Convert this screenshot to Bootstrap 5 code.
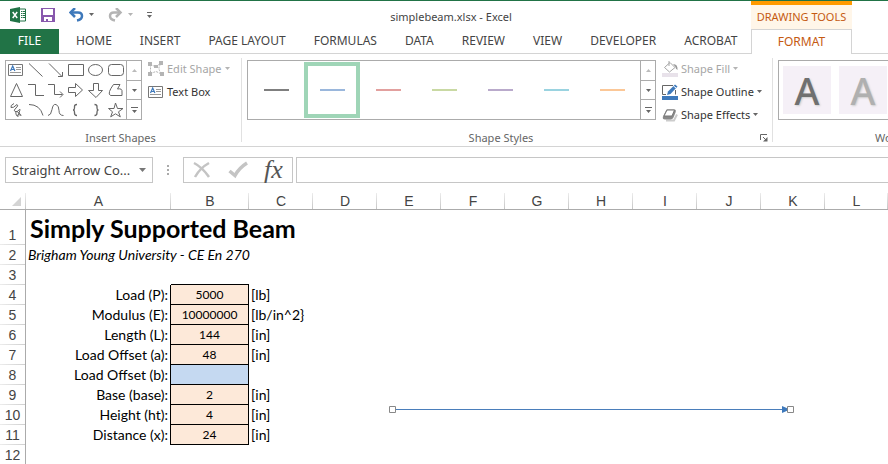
<!DOCTYPE html>
<html lang="en">
<head>
<meta charset="utf-8">
<meta name="viewport" content="width=device-width, initial-scale=1">
<title>simplebeam.xlsx - Excel</title>
<link href="https://cdn.jsdelivr.net/npm/bootstrap@5.3.0/dist/css/bootstrap.min.css" rel="stylesheet">
<style>
body{font:11px/16px "Noto Sans","Open Sans",sans-serif;color:#444;background:#fff;overflow:hidden}
button,a,select,input{font:inherit;color:inherit}
button{background:none;border:0;padding:0}
svg{display:block;flex:none}
.titlebar{height:29px;border-top:1px solid #217346}
.qat{width:151px;padding-left:10px;gap:14px}
.context-head{width:101px;margin-right:36px;border-top:4px solid #ff9a00;background:#fff6e9;color:#c55a11}
.tabs{height:25px;font-size:12px}
.tabs a{padding:0 14px;border-bottom:1px solid #d4d4d4;text-decoration:none;white-space:nowrap;line-height:24px}
.tabs .file-tab{width:59px;flex:none;padding:0;background:#217346;border-color:#217346;color:#fff;text-align:center}
.tabs .context-tab{width:101px;flex:none;padding:0;text-align:center;border:1px solid #d4d4d4;border-bottom:0;color:#c55a11;line-height:23px}
.tabs .fill{border-bottom:1px solid #d4d4d4}
.tabs .tab-start{width:3px;flex:none}
.tabs .tab-end{width:36px;flex:none}
.ribbon{height:93px;border-bottom:1px solid #d4d4d4;padding:4px 0}
.group{border-right:1px solid #e1e1e1;padding-top:2px;flex:none}
.group-insert{width:242px}
.group-styles{width:531px}
.group-wordart{padding:2px 0 0 5px;min-width:0}
.group-label{color:#666;height:8px;line-height:8px;margin-top:auto;white-space:nowrap}
.group-wordart .group-label{padding-left:97px}
.tools{padding-left:5px}
.gallery{height:60px;border:1px solid #ababab}
.shapes{display:grid;grid-template-columns:repeat(6,20px);grid-auto-rows:20px;align-content:center}
.scroller{width:15px;border-left:1px solid #ababab}
.scroller button{flex:1;display:flex;align-items:center;justify-content:center;border-top:1px solid #ababab}
.scroller button:first-child{border-top:0}
.style-item{width:56px;height:56px;display:flex;align-items:center;justify-content:center}
.style-item.chosen{border:4px solid #9fd5b7}
.style-item i{width:25px;height:2px;background:currentColor}
.cmds{margin:-3px 0 -6px 6px}
.cmd{height:23px;display:flex;align-items:center;gap:3px;white-space:nowrap;color:#333}
.cmd.off{color:#a6a6a6}
.wordart{width:48px;height:48px;background:#f5f0f7;flex:none;font-size:38px;line-height:48px;font-weight:500;color:#707070;text-shadow:1px 1px 2px #ccc}
.wordart.pale{color:#b0b0b0}
.formula{padding:10px 0 10px 5px;height:46px}
.boxed{border:1px solid #c6c6c6;height:26px}
.namebox{width:148px}
.namebox select{appearance:none;border:0;background:none;width:100%;padding:0 18px 0 6px;font-size:13px}
.namebox svg{margin-left:-13px;pointer-events:none}
.grip{margin:0 14px}
.fxbox{width:110px}
.fx{font:italic 26px/22px "Liberation Serif",serif;color:#555}
.fxbar{border-right:0;border-radius:0;padding:0 6px;min-width:0;margin-left:3px}
.sheet{color:#000;font:14px/18px Lato,sans-serif}
.grid{table-layout:fixed;width:100%;border-collapse:separate;border-spacing:0}
.grid th,.grid td{padding:0 1px;height:20px;white-space:nowrap;overflow:visible}
.grid th{font:14px/16px "Liberation Sans",sans-serif;color:#444;text-align:center}
.grid thead th{height:17px;border-bottom:1px solid #ababab;background:linear-gradient(#ececec,#c6c6c6) right/1px 100% no-repeat}
.grid tbody th{border-right:1px solid #ababab;background:linear-gradient(90deg,#ececec,#d0d0d0) bottom/100% 1px no-repeat;vertical-align:bottom;padding-bottom:2px}
.grid .r-head{width:26px}.grid .c-a{width:145px}.grid .c-b{width:78px}.grid .c-n{width:64px}
.grid .tall td,.grid .tall th{height:35px}
.grid td.heading{font-size:25px;font-weight:700;line-height:34px;padding-left:4px}
.grid td.sub{font-style:italic;padding-left:2px}
.grid .lbl{text-align:right;border-right:1px solid #000;padding-right:2px}
.grid .val{font-size:12px;text-align:center;background:#fde9d9;border-right:1px solid #000;border-bottom:1px solid #000}
.grid .blue{background:#c5d9f1}
.grid .edge{border-bottom:1px solid #000}
.grid .unit{padding-left:2px}
.connector{position:absolute;left:389px;top:213px}
</style>
<script src="https://cdn.jsdelivr.net/npm/bootstrap@5.3.0/dist/js/bootstrap.bundle.min.js"></script>
</head>
<body>
<header>
<div class="titlebar d-flex">
  <div class="qat d-flex align-items-center flex-shrink-0">
    <svg width="17" height="16" viewBox="0 0 17 16" aria-hidden="true"><path d="M9 2h6.500v12H9z" fill="#fff" stroke="#217346"/><path d="M11 4.500h1.500M13 4.500h2M11 6.500h1.500M13 6.500h2M11 8.500h1.500M13 8.500h2M11 10.500h1.500M13 10.500h2" stroke="#217346"/><path d="M0 2 10 0v16L0 14z" fill="#217346"/><path d="M2.700 5l4.500 6M7.200 5l-4.500 6" stroke="#fff" stroke-width="1.500"/></svg>
    <button aria-label="Save"><svg width="14" height="14" viewBox="0 0 14 14"><path d="M0 0h14v14H0z" fill="#8858ad"/><path d="M2 1h10v6H2zM3 9h8v4H3z" fill="#fff"/><path d="M5 11h2v2H5z" fill="#8858ad"/></svg></button>
    <button aria-label="Undo"><svg width="25" height="14" viewBox="0 0 25 14"><path d="M1.500 4.500H9q4 0 4 3.500t-5 4.500" fill="none" stroke="#3e79bb" stroke-width="2.500"/><path d="M6 0 1.500 4.500 6 9" fill="none" stroke="#3e79bb" stroke-width="2.500"/><path d="M20 5h5l-2.500 3z" fill="#666"/></svg></button>
    <button aria-label="Redo"><svg width="25" height="14" viewBox="0 0 25 14"><path d="M12.500 4.500H6q-4 0-4 3.500t5 4.500" fill="none" stroke="#b4b4b4" stroke-width="2.500"/><path d="M8 0l4.500 4.500L8 9" fill="none" stroke="#b4b4b4" stroke-width="2.500"/><path d="M20 5h5l-2.500 3z" fill="#b4b4b4"/></svg></button>
    <button aria-label="Customize toolbar"><svg width="5" height="6" viewBox="0 0 5 6"><path d="M0 0h5v1H0zM0 3h5L2.500 6z" fill="#666"/></svg></button>
  </div>
  <div class="flex-grow-1 d-flex align-items-center justify-content-center pt-1">simplebeam.xlsx - Excel</div>
  <div class="context-head d-flex align-items-center justify-content-center flex-shrink-0">DRAWING TOOLS</div>
</div>
<nav class="tabs d-flex">
  <a class="file-tab" href="#">FILE</a><span class="fill tab-start"></span>
  <a href="#">HOME</a><a href="#">INSERT</a><a href="#">PAGE LAYOUT</a><a href="#">FORMULAS</a><a href="#">DATA</a><a href="#">REVIEW</a><a href="#">VIEW</a><a href="#">DEVELOPER</a><a class="pe-0" href="#">ACROBAT</a>
  <span class="fill flex-grow-1"></span><a class="context-tab" href="#">FORMAT</a><span class="fill tab-end"></span>
</nav>
</header>
<section class="ribbon d-flex">
  <div class="group group-insert d-flex flex-column">
    <div class="tools d-flex">
      <div class="gallery d-flex">
        <div class="shapes">
          <button aria-label="Text box"><svg width="20" height="20" viewBox="0 0 20 20"><path d="M2.500 4.500h14v11h-14z" fill="#fff" stroke="#777"/><path d="M4.500 11 6.700 6l2.200 5M5.300 9.500h3" stroke="#3e79bb" stroke-width="1.200" fill="none"/><path d="M10 7.500h5M10 9.500h5M4 12.500h11" stroke="#999"/></svg></button>
          <button aria-label="Line"><svg width="20" height="20" viewBox="0 0 20 20" fill="none" stroke="#666"><path d="M3 3.500 16.500 16.500"/></svg></button>
          <button aria-label="Arrow"><svg width="20" height="20" viewBox="0 0 20 20" fill="none" stroke="#666"><path d="M3 3.500 16 16.500M12 16.500h4.500V12"/></svg></button>
          <button aria-label="Rectangle"><svg width="20" height="20" viewBox="0 0 20 20" fill="none" stroke="#666"><path d="M2.500 4.500h15v11h-15z"/></svg></button>
          <button aria-label="Oval"><svg width="20" height="20" viewBox="0 0 20 20" fill="none" stroke="#666"><ellipse cx="9.500" cy="10" rx="7" ry="5.500"/></svg></button>
          <button aria-label="Rounded rectangle"><svg width="20" height="20" viewBox="0 0 20 20" fill="none" stroke="#666"><rect x="2.500" y="4.500" width="15" height="11" rx="3"/></svg></button>
          <button aria-label="Triangle"><svg width="20" height="20" viewBox="0 0 20 20" fill="none" stroke="#666"><path d="M10.500 3.500 16.500 16.500h-12z"/></svg></button>
          <button aria-label="Elbow connector"><svg width="20" height="20" viewBox="0 0 20 20" fill="none" stroke="#666"><path d="M2 4.500h7.500v11H18"/></svg></button>
          <button aria-label="Elbow arrow"><svg width="20" height="20" viewBox="0 0 20 20" fill="none" stroke="#666"><path d="M2 4.500h6.500v10h8M14 11.500l3 3-3 3"/></svg></button>
          <button aria-label="Right arrow"><svg width="20" height="20" viewBox="0 0 20 20" fill="none" stroke="#666"><path d="M2.500 7.500h7v-4L16.500 10l-7 6.500v-4h-7z"/></svg></button>
          <button aria-label="Down arrow"><svg width="20" height="20" viewBox="0 0 20 20" fill="none" stroke="#666"><path d="M7.500 3.500h5v7h4L10 17.500 2.500 10.500h5z"/></svg></button>
          <button aria-label="Freeform"><svg width="20" height="20" viewBox="0 0 20 20" fill="none" stroke="#666"><path d="M7.500 4.500H14L11.500 9q5-1 4.500 3v3.500H4.500q-2-1-1-4t4-7z"/></svg></button>
          <button aria-label="Scribble"><svg width="20" height="20" viewBox="0 0 20 20" fill="none" stroke="#666"><path d="M8 3.500Q4 5.500 5 7.500q2 1 6-3 2 1-1 3.500t-1 3.500 4-1.500 0 3-3 1 3-1 1 2-2 2"/></svg></button>
          <button aria-label="Arc"><svg width="20" height="20" viewBox="0 0 20 20" fill="none" stroke="#666"><path d="M3 4.500q11 0 14 11"/></svg></button>
          <button aria-label="Curve"><svg width="20" height="20" viewBox="0 0 20 20" fill="none" stroke="#666"><path d="M2 15.500q3 0 4-6t4-5 3 6 4.500 5"/></svg></button>
          <button aria-label="Left brace"><svg width="20" height="20" viewBox="0 0 20 20" fill="none" stroke="#666" stroke-width="1.300"><path d="M11 4.500q-2.500 0-2.500 2v1.500q0 2-1.500 2 1.500 0 1.500 2V13q0 2.500 2.500 2.500"/></svg></button>
          <button aria-label="Right brace"><svg width="20" height="20" viewBox="0 0 20 20" fill="none" stroke="#666" stroke-width="1.300"><path d="M8.500 4.500q2.500 0 2.500 2v1.500q0 2 1.500 2-1.500 0-1.500 2V13q0 2.500-2.500 2.500"/></svg></button>
          <button aria-label="Star"><svg width="20" height="20" viewBox="0 0 20 20" fill="none" stroke="#666"><path d="M9.500 3l2 5.500h5.500l-4.500 3.300 1.800 5-4.800-3-4.800 3 1.800-5L2.500 8.500H8z"/></svg></button>
        </div>
        <div class="scroller d-flex flex-column">
          <button aria-label="Scroll up"><svg width="5" height="3" viewBox="0 0 5 3"><path d="M0 3h5L2.500 0z" fill="#bbb"/></svg></button>
          <button aria-label="Scroll down"><svg width="5" height="3" viewBox="0 0 5 3"><path d="M0 0h5L2.500 3z" fill="#666"/></svg></button>
          <button aria-label="More shapes"><svg width="7" height="6" viewBox="0 0 7 6"><path d="M0 0h7v1H0zM1 3h5L3.500 6z" fill="#666"/></svg></button>
        </div>
      </div>
      <div class="cmds">
        <button class="cmd off"><svg width="16" height="16" viewBox="0 0 16 16"><path d="M2.500 3.500 8 6l4.500-4M2.500 3.500v9M2.500 12.500l5.500-2 5.500 2.500M13 3q-4 4 0 9" fill="none" stroke="#b4b4b4" stroke-dasharray="2 1"/><path d="M0 1h4v4H0zM0 11h4v4H0zM11 0h4v4h-4zM12 11h4v4h-4zM6 4h4v3H6z" fill="#b4b4b4"/></svg>Edit Shape<svg width="5" height="3" viewBox="0 0 5 3"><path d="M0 0h5L2.500 3z" fill="#b4b4b4"/></svg></button>
        <button class="cmd"><svg width="16" height="16" viewBox="0 0 16 16"><path d="M.5 2.500h14v11H.5z" fill="#fff" stroke="#777"/><path d="M2.500 9 4.700 4l2.200 5M3.300 7.500h3" stroke="#3e79bb" stroke-width="1.200" fill="none"/><path d="M8 5.500h5M8 7.500h5M2 10.500h11" stroke="#999"/></svg>Text Box</button>
      </div>
    </div>
    <div class="group-label text-center">Insert Shapes</div>
  </div>
  <div class="group group-styles d-flex flex-column">
    <div class="tools d-flex">
      <div class="gallery d-flex">
        <div class="d-flex align-items-center">
          <button class="style-item" style="color:#7f7f7f" aria-label="Black line"><i></i></button>
          <button class="style-item chosen" style="color:#9ab7dc" aria-label="Blue line"><i></i></button>
          <button class="style-item" style="color:#e2a09e" aria-label="Red line"><i></i></button>
          <button class="style-item" style="color:#c9d9a3" aria-label="Green line"><i></i></button>
          <button class="style-item" style="color:#b9aacb" aria-label="Purple line"><i></i></button>
          <button class="style-item" style="color:#9ad3e0" aria-label="Aqua line"><i></i></button>
          <button class="style-item" style="color:#fbc797" aria-label="Orange line"><i></i></button>
        </div>
        <div class="scroller d-flex flex-column">
          <button aria-label="Scroll up"><svg width="5" height="3" viewBox="0 0 5 3"><path d="M0 3h5L2.500 0z" fill="#bbb"/></svg></button>
          <button aria-label="Scroll down"><svg width="5" height="3" viewBox="0 0 5 3"><path d="M0 0h5L2.500 3z" fill="#666"/></svg></button>
          <button aria-label="More styles"><svg width="7" height="6" viewBox="0 0 7 6"><path d="M0 0h7v1H0zM1 3h5L3.500 6z" fill="#666"/></svg></button>
        </div>
      </div>
      <div class="cmds">
        <button class="cmd off"><svg width="16" height="16" viewBox="0 0 16 16"><path d="M0 12h16v4H0z" fill="#e8e2ea"/><path d="M2.500 6.500 8 1.500l5 5-5.500 4.500zM7 0v5" fill="#fff" stroke="#a6a6a6"/><path d="M11 3q5 0 4.500 6-2-1-2-3z" fill="#999"/></svg>Shape Fill<svg width="5" height="3" viewBox="0 0 5 3"><path d="M0 0h5L2.500 3z" fill="#b4b4b4"/></svg></button>
        <button class="cmd"><svg width="16" height="16" viewBox="0 0 16 16"><path d="M0 12h16v4H0z" fill="#3e79bb"/><path d="M11 1.500H.5v9H4M13.500 6v4.500" fill="none" stroke="#666"/><path d="M5 11l1-3.500 7-7 2.500 2L8.500 10z" fill="#3e79bb"/><path d="M11.500 2l2.500 2" stroke="#fff"/></svg>Shape Outline<svg width="5" height="3" viewBox="0 0 5 3"><path d="M0 0h5L2.500 3z" fill="#666"/></svg></button>
        <button class="cmd"><svg width="16" height="16" viewBox="0 0 16 16"><path d="M4 13.500h8l3-6" fill="none" stroke="#ccc" stroke-width="2"/><path d="M4.500 2.500h8q2 0 1 3l-2 5q-1 2-3 2H3q-3 0-2-3z" fill="#888"/><path d="M5 3h7.500L10 9H2z" fill="#fff" stroke="#777"/></svg>Shape Effects<svg width="5" height="3" viewBox="0 0 5 3"><path d="M0 0h5L2.500 3z" fill="#666"/></svg></button>
      </div>
    </div>
    <div class="group-label d-flex align-items-center pe-1">
      <span class="flex-grow-1 text-center">Shape Styles</span>
      <button aria-label="Format shape"><svg width="8" height="8" viewBox="0 0 8 8"><path d="M.5 6V.5H7M3 3l3 3" fill="none" stroke="#666"/><path d="M7.500 3v4.500H3z" fill="#666"/></svg></button>
    </div>
  </div>
  <div class="group-wordart d-flex flex-column flex-grow-1 overflow-hidden">
    <div class="gallery d-flex align-items-center gap-2 ps-1 border-end-0 overflow-hidden">
      <button class="wordart">A</button>
      <button class="wordart pale">A</button>
    </div>
    <div class="group-label">WordArt Styles</div>
  </div>
</section>
<section class="formula d-flex">
  <div class="boxed namebox d-flex align-items-center flex-shrink-0"><select aria-label="Name box"><option>Straight Arrow Co...</option></select><svg width="7" height="4" viewBox="0 0 7 4"><path d="M0 0h7L3.500 4z" fill="#777"/></svg></div>
  <svg class="grip" width="2" height="26" viewBox="0 0 2 26"><path d="M0 8h2v2H0zM0 12h2v2H0zM0 16h2v2H0z" fill="#aaa"/></svg>
  <div class="boxed fxbox d-flex align-items-center flex-shrink-0 gap-3 ps-2">
    <button aria-label="Cancel"><svg width="20" height="18" viewBox="0 0 20 18"><path d="M2 2q8 4 15 14M17 2Q8 7 3 16" fill="none" stroke="#c4c4c4" stroke-width="2.500"/></svg></button>
    <button aria-label="Enter"><svg width="20" height="18" viewBox="0 0 20 18"><path d="M1.500 10 7 14.500Q11 7 19 2" fill="none" stroke="#c4c4c4" stroke-width="3.500"/></svg></button>
    <button class="fx" aria-label="Insert function">fx</button>
  </div>
  <input class="boxed fxbar flex-grow-1" type="text" aria-label="Formula bar">
</section>
<main class="sheet position-relative">
<table class="grid">
<colgroup><col class="r-head"><col class="c-a"><col class="c-b"><col class="c-n"><col class="c-n"><col class="c-n"><col class="c-n"><col class="c-n"><col class="c-n"><col class="c-n"><col class="c-n"><col class="c-n"><col></colgroup>
<thead><tr><th aria-label="Select all"><svg width="9" height="9" viewBox="0 0 9 9" class="ms-auto me-1"><path d="M9 0v9H0z" fill="#d4d4d4"/></svg></th><th>A</th><th>B</th><th>C</th><th>D</th><th>E</th><th>F</th><th>G</th><th>H</th><th>I</th><th>J</th><th>K</th><th>L</th></tr></thead>
<tbody>
<tr class="tall"><th>1</th><td class="heading" colspan="12">Simply Supported Beam</td></tr>
<tr><th>2</th><td class="sub" colspan="12">Brigham Young University - CE En 270</td></tr>
<tr><th>3</th><td></td><td class="edge"></td><td colspan="10"></td></tr>
<tr><th>4</th><td class="lbl">Load (P):</td><td class="val">5000</td><td class="unit" colspan="10">[lb]</td></tr>
<tr><th>5</th><td class="lbl">Modulus (E):</td><td class="val">10000000</td><td class="unit" colspan="10">[lb/in^2}</td></tr>
<tr><th>6</th><td class="lbl">Length (L):</td><td class="val">144</td><td class="unit" colspan="10">[in]</td></tr>
<tr><th>7</th><td class="lbl">Load Offset (a):</td><td class="val">48</td><td class="unit" colspan="10">[in]</td></tr>
<tr><th>8</th><td class="lbl">Load Offset (b):</td><td class="val blue"></td><td colspan="10"></td></tr>
<tr><th>9</th><td class="lbl">Base (base):</td><td class="val">2</td><td class="unit" colspan="10">[in]</td></tr>
<tr><th>10</th><td class="lbl">Height (ht):</td><td class="val">4</td><td class="unit" colspan="10">[in]</td></tr>
<tr><th>11</th><td class="lbl">Distance (x):</td><td class="val">24</td><td class="unit" colspan="10">[in]</td></tr>
<tr><th>12</th><td></td><td></td><td colspan="10"></td></tr>
</tbody>
</table>
<svg class="connector" width="405" height="7" viewBox="0 0 405 7" role="img" aria-label="Straight Arrow Connector"><path d="M6 3h390v1H6z" fill="#4a7ebb"/><path d="M393 0l8 3.500-8 3.500z" fill="#3e79bb"/><path d="M.5.5h6v6h-6zM398.500.5h6v6h-6z" fill="#fff" stroke="#888"/></svg>
</main>
</body>
</html>
